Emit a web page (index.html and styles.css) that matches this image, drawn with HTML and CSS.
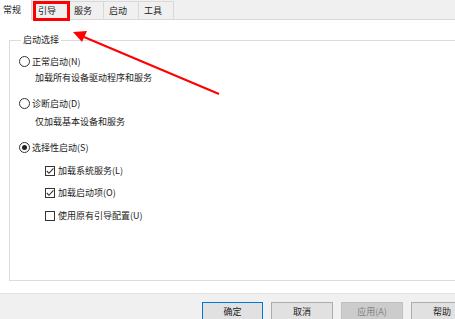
FILE: index.html
```html
<!DOCTYPE html>
<html lang="zh-CN">
<head>
<meta charset="utf-8">
<title>系统配置</title>
<link rel="stylesheet" href="styles.css">
</head>
<body>
<div class="dialog">
  <div class="tabs">
    <div class="tab tab-active">常规</div>
    <div class="tab tab-wide">引导</div>
    <div class="tab">服务</div>
    <div class="tab">启动</div>
    <div class="tab">工具</div>
    <div class="tab-fill"></div>
  </div>
  <div class="page">
    <fieldset class="group">
      <legend class="legend">启动选择</legend>
      <div class="opt opt-1"><span class="radio"></span>正常启动(N)</div>
      <div class="desc desc-1">加载所有设备驱动程序和服务</div>
      <div class="opt opt-2"><span class="radio"></span>诊断启动(D)</div>
      <div class="desc desc-2">仅加载基本设备和服务</div>
      <div class="opt opt-3"><span class="radio radio-on"></span>选择性启动(S)</div>
      <div class="chk chk-1"><span class="box"><svg viewBox="0 0 10 10" width="10" height="10"><path d="M1.8 5 L4 7.3 L8.4 2.4" fill="none" stroke="#333" stroke-width="1.1"/></svg></span>加载系统服务(L)</div>
      <div class="chk chk-2"><span class="box"><svg viewBox="0 0 10 10" width="10" height="10"><path d="M1.8 5 L4 7.3 L8.4 2.4" fill="none" stroke="#333" stroke-width="1.1"/></svg></span>加载启动项(O)</div>
      <div class="chk chk-3"><span class="box"></span>使用原有引导配置(U)</div>
    </fieldset>
  </div>
  <div class="buttons">
    <div class="btn btn-default">确定</div>
    <div class="btn">取消</div>
    <div class="btn btn-disabled">应用(A)</div>
    <div class="btn">帮助</div>
  </div>
  <div class="highlight"></div>
  <svg class="arrow" width="455" height="319" viewBox="0 0 455 319">
    <line x1="219" y1="94" x2="84" y2="37" stroke="#f00" stroke-width="2"/>
    <polygon points="73,32 87,31 82,42" fill="#f00"/>
  </svg>
</div>
</body>
</html>
```
FILE: styles.css
```css
html, body {
  margin: 0;
  padding: 0;
}
body {
  width: 455px;
  height: 319px;
  overflow: hidden;
  background: #ffffff;
  font-family: "Noto Sans CJK SC", "Microsoft YaHei", sans-serif;
  font-size: 9px;
  color: #222222;
}
.dialog {
  position: relative;
  width: 455px;
  height: 319px;
  display: flex;
  flex-direction: column;
}
.tabs {
  display: flex;
  height: 20px;
  background: #f0f0f0;
  flex: none;
}
.tab {
  box-sizing: border-box;
  width: 35px;
  height: 19px;
  margin-top: 1px;
  padding: 0 0 0 5px;
  line-height: 18px;
  background: #f0f0f0;
  border-top: 1px solid #d9d9d9;
  border-right: 1px solid #d9d9d9;
  border-bottom: 1px solid #d9d9d9;
}
.tab-active {
  width: 32px;
  height: 20px;
  margin-top: 0;
  padding: 0 0 0 3px;
  background: #ffffff;
  border-top: none;
  border-bottom: none;
  line-height: 20px;
}
.tab-wide {
  width: 37px;
  padding-left: 6px;
}
.tab-fill {
  flex: 1;
  border-bottom: 1px solid #d9d9d9;
  height: 19px;
}
.page {
  flex: 1;
  background: #ffffff;
  padding: 12px 0 0 9px;
  box-sizing: border-box;
}
.group {
  margin: 0 -20px 0 0;
  padding: 0 0 0 9px;
  border: 1px solid #dcdcdc;
  height: 249px;
  box-sizing: border-box;
}
.legend {
  margin-left: 2px;
  padding: 0 2px;
  line-height: 16px;
}
.opt, .desc, .chk {
  display: flex;
  align-items: center;
  height: 15px;
  line-height: 15px;
  white-space: nowrap;
}
.opt-1 { margin-top: 6px; }
.desc-1 { margin-top: 1px; padding-left: 16px; }
.opt-2 { margin-top: 11px; }
.desc-2 { margin-top: 3px; padding-left: 16px; }
.opt-3 { margin-top: 11px; }
.chk { padding-left: 26px; }
.chk-1 { margin-top: 8px; }
.chk-2 { margin-top: 7px; }
.chk-3 { margin-top: 8px; }
.radio {
  box-sizing: border-box;
  width: 11px;
  height: 11px;
  border: 1px solid #333333;
  border-radius: 50%;
  margin-right: 2px;
  display: flex;
  align-items: center;
  justify-content: center;
  flex: none;
}
.radio-on::after {
  content: "";
  width: 5px;
  height: 5px;
  border-radius: 50%;
  background: #222222;
}
.box {
  box-sizing: border-box;
  width: 10px;
  height: 10px;
  border: 1px solid #333333;
  margin-right: 3px;
  flex: none;
  display: flex;
  align-items: center;
  justify-content: center;
}
.box svg {
  display: block;
  flex: none;
  margin: -1px;
}
.buttons {
  flex: none;
  height: 26px;
  box-sizing: border-box;
  background: #f0f0f0;
  border-top: 1px solid #e3e3e3;
  display: flex;
  gap: 8px;
  padding: 8px 0 0 202px;
  overflow: hidden;
}
.btn {
  flex: none;
  box-sizing: border-box;
  width: 62px;
  height: 17px;
  padding-top: 2px;
  background: #e1e1e1;
  border: 1px solid #adadad;
  border-bottom: none;
  text-align: center;
  line-height: 14px;
  color: #1a1a1a;
}
.btn-default {
  border-color: #0078d7;
  width: 61px;
}
.btn-disabled {
  background: #cccccc;
  border-color: #bfbfbf;
  color: #838383;
}
.highlight {
  position: absolute;
  left: 33px;
  top: 1px;
  width: 37px;
  height: 20px;
  box-sizing: border-box;
  border: 3px solid #ff0000;
}
.arrow {
  position: absolute;
  left: 0;
  top: 0;
  pointer-events: none;
}
```
